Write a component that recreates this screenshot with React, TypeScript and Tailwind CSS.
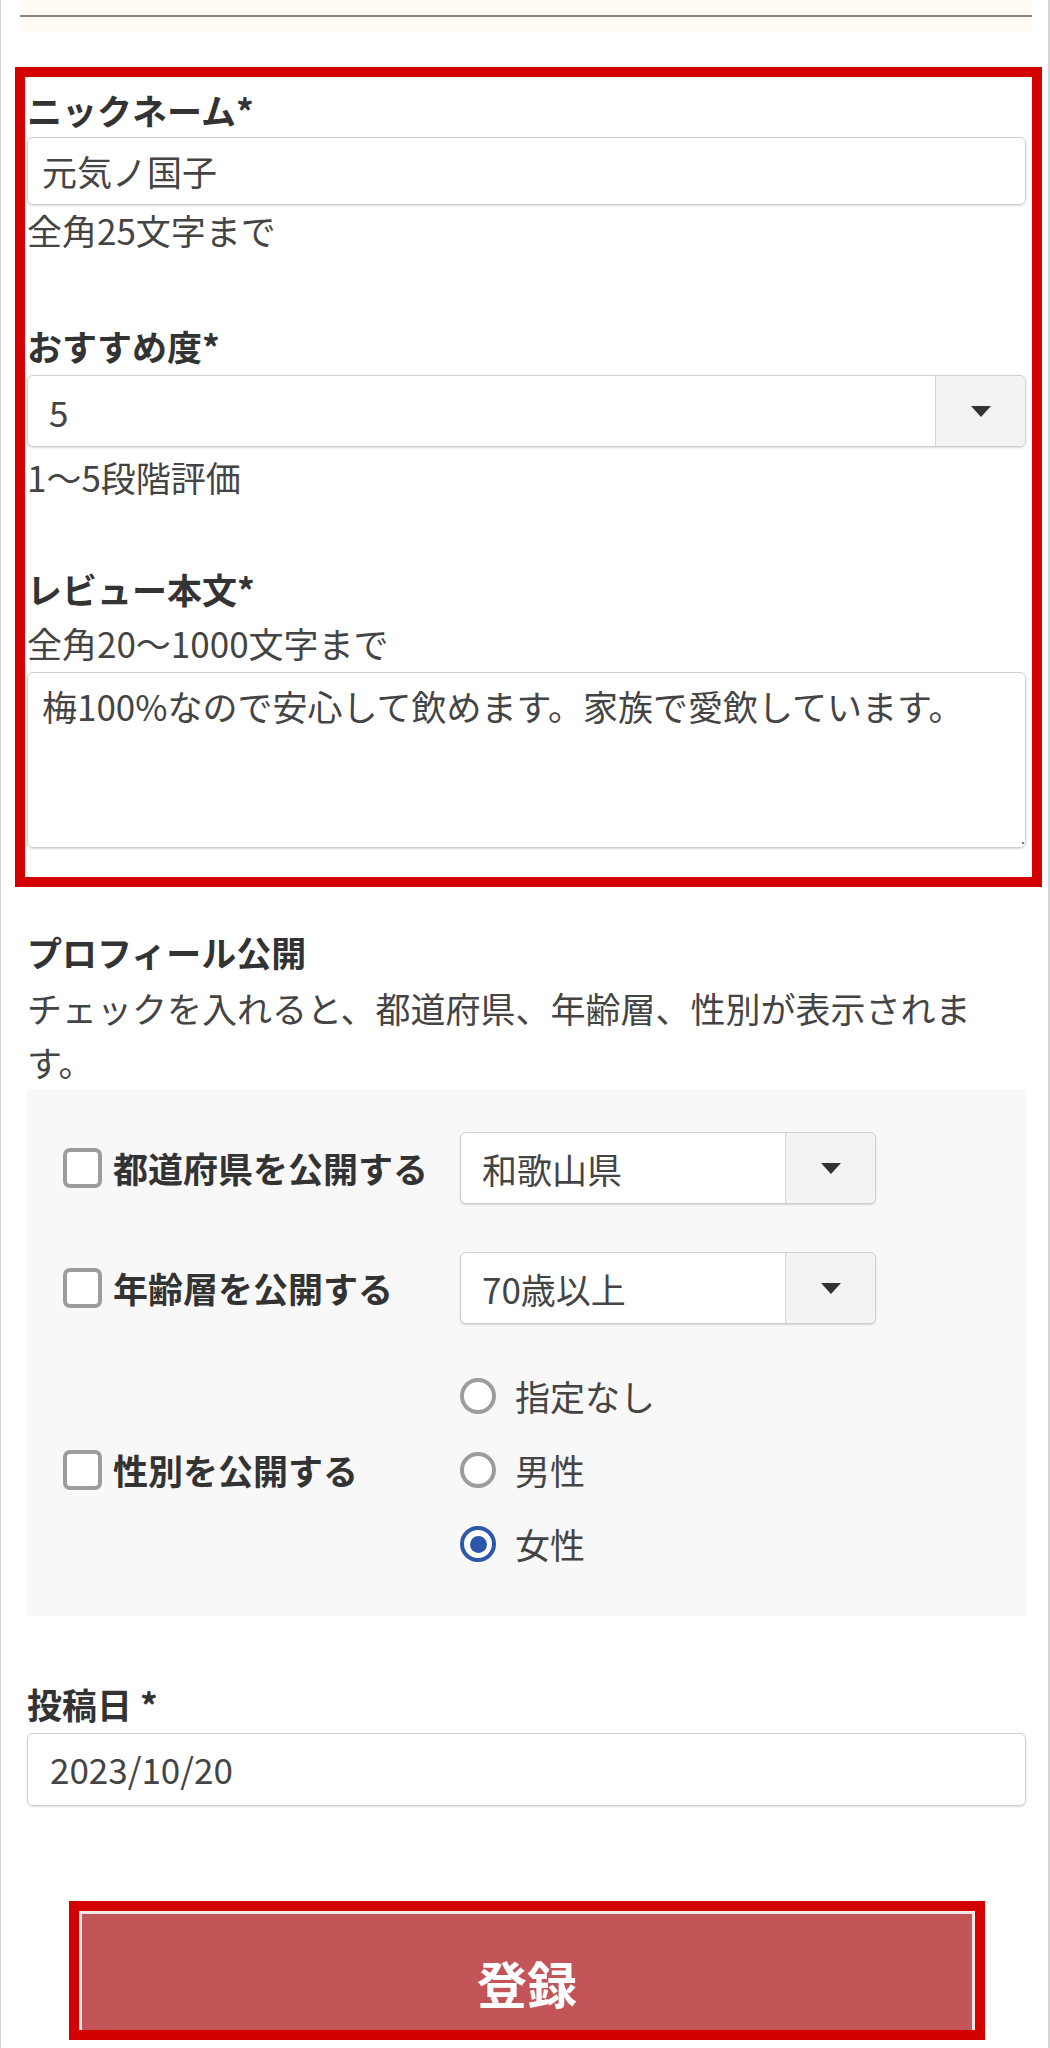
import React from "react";

function SelectBox({ value, className }: { value: string; className: string }) {
  return (
    <div
      className={`flex h-[72px] border border-[#cfcfcf] rounded-[6px] bg-white shadow-[0_1px_2px_rgba(0,0,0,0.15)] overflow-hidden ${className}`}
    >
      <div className="flex-1 flex items-center pl-[21px] text-[35px] text-[#444] leading-none">{value}</div>
      <div className="w-[90px] border-l border-[#d6d6d6] bg-[#f3f3f3] flex items-center justify-center">
        <svg width="20" height="11" viewBox="0 0 20 11">
          <path d="M0 0h20L10 11z" fill="#333" />
        </svg>
      </div>
    </div>
  );
}

function Checkbox() {
  return <div className="w-[39px] h-[40px] shrink-0 rounded-[7px] border-[4px] border-[#9c9c9c] bg-white" />;
}

function Radio({ checked, label }: { checked?: boolean; label: string }) {
  return (
    <div className="h-[74px] flex items-center gap-[19px]">
      {checked ? (
        <div className="w-[36px] h-[36px] rounded-full border-[4px] border-[#2c57aa] bg-white flex items-center justify-center">
          <div className="w-[17px] h-[17px] rounded-full bg-[#2c57aa]" />
        </div>
      ) : (
        <div className="w-[36px] h-[36px] rounded-full border-[4px] border-[#9c9c9c] bg-white" />
      )}
      <span className="text-[35px] text-[#444] leading-[50px]">{label}</span>
    </div>
  );
}

export default function App() {
  return (
    <div className="w-[1050px] min-h-[2048px] bg-white border-l border-r-2 border-[#d6d6d6] text-[#333] font-['Noto_Sans_CJK_JP','Noto_Sans',sans-serif] overflow-hidden">
      {/* top rule */}
      <div className="ml-[19px] mr-[16px] h-[31px] bg-[#fffaf4] flex items-center">
        <div className="h-[2px] w-full bg-[#8e8279]" />
      </div>

      {/* red annotated box */}
      <div className="mt-[36px] ml-[14px] mr-[6px] border-[10px] border-[#d40000] pl-[2px] pr-[6px] pt-[8px] pb-[29px]">
        <div className="text-[35px] leading-[50px] font-bold">ニックネーム*</div>
        <div className="mt-[2px] h-[68px] border border-[#cfcfcf] rounded-[6px] shadow-[0_1px_2px_rgba(0,0,0,0.15)] flex items-center pl-[14px] text-[35px] text-[#444]">
          元気ノ国子
        </div>
        <div className="text-[35px] leading-[50px] text-[#444]">全角25文字まで</div>

        <div className="mt-[66px] text-[35px] leading-[50px] font-bold">おすすめ度*</div>
        <SelectBox value="5" className="mt-[4px]" />
        <div className="mt-[5px] text-[35px] leading-[50px] text-[#444]">1〜5段階評価</div>

        <div className="mt-[62px] text-[35px] leading-[50px] font-bold">レビュー本文*</div>
        <div className="mt-[4px] text-[35px] leading-[50px] text-[#444]">全角20〜1000文字まで</div>
        <div className="relative mt-[4px] h-[176px] border border-[#cfcfcf] rounded-[6px] shadow-[0_1px_2px_rgba(0,0,0,0.15)] pl-[14px] pt-[8px] text-[35px] leading-[50px] text-[#444]">
          梅100%なので安心して飲めます。家族で愛飲しています。
          <div className="absolute right-[1px] bottom-[3px] w-[2px] h-[2px] bg-[#777]" />
        </div>
      </div>

      <div className="ml-[26px] mr-[22px]">
        <div className="mt-[40px] text-[35px] leading-[50px] font-bold">プロフィール公開</div>
        <div className="mt-[4px] text-[35px] leading-[54px] text-[#444]">
          チェックを入れると、都道府県、年齢層、性別が表示されます。
        </div>

        {/* gray panel */}
        <div className="bg-[#f8f8f8] pl-[36px] pt-[43px] pb-[35px]">
          <div className="grid grid-cols-[397px_416px] items-center">
            <div className="flex items-center gap-[11px]">
              <Checkbox />
              <span className="text-[35px] font-bold leading-[50px]">都道府県を公開する</span>
            </div>
            <SelectBox value="和歌山県" className="" />
          </div>
          <div className="mt-[48px] grid grid-cols-[397px_416px] items-center">
            <div className="flex items-center gap-[11px]">
              <Checkbox />
              <span className="text-[35px] font-bold leading-[50px]">年齢層を公開する</span>
            </div>
            <SelectBox value="70歳以上" className="" />
          </div>
          <div className="mt-[35px] grid grid-cols-[397px_416px] items-center">
            <div className="flex items-center gap-[11px]">
              <Checkbox />
              <span className="text-[35px] font-bold leading-[50px]">性別を公開する</span>
            </div>
            <div className="flex flex-col">
              <Radio label="指定なし" />
              <Radio label="男性" />
              <Radio label="女性" checked />
            </div>
          </div>
        </div>

        <div className="mt-[63px] text-[35px] leading-[50px] font-bold">投稿日 *</div>
        <div className="mt-[4px] h-[73px] border border-[#cfcfcf] rounded-[6px] shadow-[0_1px_2px_rgba(0,0,0,0.15)] flex items-center pl-[22px] text-[35px] text-[#444]">
          2023/10/20
        </div>

        <div className="mt-[95px] ml-[42px] w-[916px] border-[10px] border-[#d40000]">
          <div className="h-[119px] bg-[#c35458] border-t-[3px] border-l-[3px] border-r-[3px] border-[#f3e6e6] flex items-center justify-center pt-[20px]">
            <span className="text-[50px] font-bold text-white leading-none">登録</span>
          </div>
        </div>
      </div>
    </div>
  );
}
